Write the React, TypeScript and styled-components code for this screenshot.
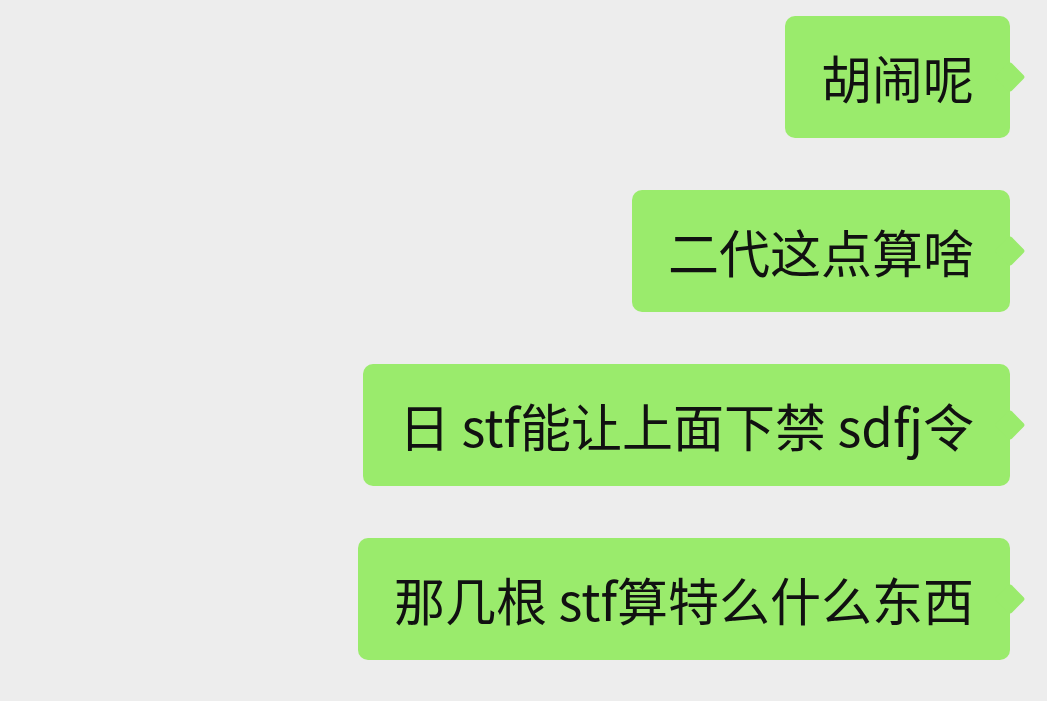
import React from "react";
import styled, { createGlobalStyle } from "styled-components";

const messages: string[] = [
  "胡闹呢",
  "二代这点算啥",
  "日 stf能让上面下禁 sdfj令",
  "那几根 stf算特么什么东西",
];

export const App = () => {
  return (
    <>
      <GlobalStyle />
      <ChatList>
        {messages.map((text, i) => (
          <Row key={i}>
            <Bubble>{text}</Bubble>
          </Row>
        ))}
      </ChatList>
    </>
  );
};

const GlobalStyle = createGlobalStyle`
  html, body {
    margin: 0;
    padding: 0;
    background: #ededed;
  }
`;

const ChatList = styled.div`
  display: flex;
  flex-direction: column;
  align-items: flex-end;
  gap: 52px;
  padding: 16px 37px 0 0;
  min-height: 701px;
  box-sizing: border-box;
  background: #ededed;
  font-family: "Noto Sans CJK SC", "Noto Sans", sans-serif;
`;

const Row = styled.div`
  display: flex;
  justify-content: flex-end;
`;

const Bubble = styled.div`
  position: relative;
  box-sizing: border-box;
  height: 122px;
  display: flex;
  align-items: center;
  padding: 0 36px;
  background: #9aeb6c;
  border-radius: 10px;
  color: #111;
  font-size: 51px;
  line-height: 1;
  white-space: pre;

  /* little tail pointing right */
  &::after {
    content: "";
    position: absolute;
    right: -11px;
    top: 50%;
    width: 22px;
    height: 22px;
    margin-top: -11px;
    background: #9aeb6c;
    border-radius: 3px;
    transform: rotate(45deg);
  }
`;

export default App;
